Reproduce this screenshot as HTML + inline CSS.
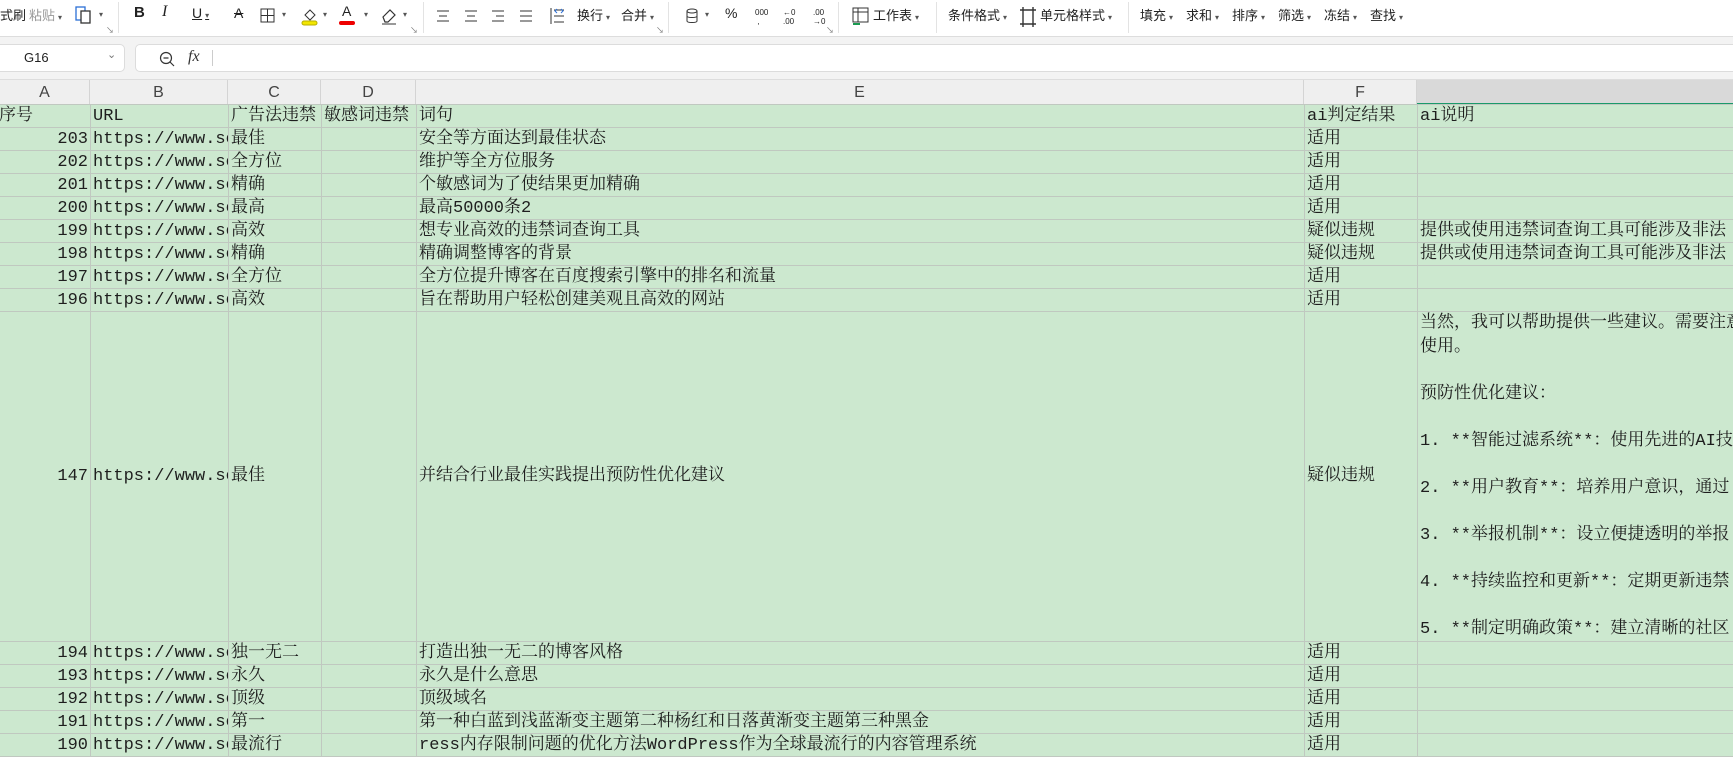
<!DOCTYPE html>
<html><head><meta charset="utf-8"><style>
*{margin:0;padding:0;box-sizing:border-box}
body{width:1733px;height:751px;overflow:hidden;background:#fff;position:relative;font-family:"Liberation Sans","Noto Sans CJK SC",sans-serif}
.t{position:absolute;font-size:13px;color:#222;top:5px;white-space:nowrap}
.c{font-size:8px;color:#555;margin-left:3px}
.sep{position:absolute;top:2px;width:1px;height:31px;background:#e3e3e3}
.ic{position:absolute;top:4px}
.corner{position:absolute;top:25px;font-size:8px;color:#777}
#tb{position:absolute;left:0;top:0;width:1733px;height:37px;background:#fff;border-bottom:1px solid #ddd;box-shadow:0 2px 4px rgba(0,0,0,.08)}
#fb{position:absolute;left:0;top:37px;width:1733px;height:42px;background:#f3f3f3}
.box{position:absolute;top:7px;height:28px;background:#fff;border:1px solid #dcdcdc;border-radius:5px}
#hdr{position:absolute;left:0;top:79px;height:25px;width:1733px;background:#efefef;border-top:1px solid #ddd}
.h{position:absolute;top:0;height:25px;line-height:25px;text-align:center;font-size:16px;color:#444;border-right:1px solid #d4d4d4}
table{position:absolute;left:-4px;top:104px;width:1751px;border-collapse:collapse;table-layout:fixed;font-family:"Liberation Mono","Noto Serif CJK SC",monospace;font-size:17px;color:#1e1e1e}
td{background:#cce8cf;border:1px solid #c0c8c0;height:23px;white-space:nowrap;overflow:hidden;padding:0 2px;line-height:21px;vertical-align:middle}
td.n{text-align:right}
</style></head><body>
<div id="tb">
<div class="t" style="left:0">式刷</div>
<div class="t" style="left:29px;color:#999">粘贴<span class="c">▾</span></div>
<svg class="ic" style="left:74px" width="20" height="22"><rect x="2" y="3" width="9" height="13" fill="none" stroke="#2b6fd6" stroke-width="1.3"/><rect x="7" y="7" width="9" height="12" fill="#fff" stroke="#333" stroke-width="1.3"/></svg>
<div class="t" style="left:96px"><span class="c">▾</span></div>
<div class="corner" style="left:106px">↘</div>
<div class="sep" style="left:118px"></div>
<div class="t" style="left:134px;font-weight:bold;font-size:15px;top:4px">B</div>
<div class="t" style="left:162px;font-style:italic;font-family:'Liberation Serif';font-size:16px;top:3px">I</div>
<div class="t" style="left:192px;text-decoration:underline;font-size:14px">U<span class="c">▾</span></div>
<div class="t" style="left:234px;text-decoration:line-through;font-size:14px">A</div>
<svg class="ic" style="left:260px;top:8px" width="16" height="16"><rect x="1" y="1" width="13" height="13" fill="none" stroke="#333"/><line x1="7.5" y1="1" x2="7.5" y2="14" stroke="#333"/><line x1="1" y1="7.5" x2="14" y2="7.5" stroke="#333"/></svg>
<div class="t" style="left:279px"><span class="c">▾</span></div>
<svg class="ic" style="left:301px;top:6px" width="18" height="22"><path d="M4 9l5-5 5 5-5 5z" fill="none" stroke="#333"/><rect x="1" y="15" width="15" height="4" rx="2" fill="#f2e600" stroke="#b8ad00"/></svg>
<div class="t" style="left:320px"><span class="c">▾</span></div>
<div class="t" style="left:342px;font-size:14px;top:3px">A</div>
<div style="position:absolute;left:339px;top:21px;width:16px;height:4px;background:#e00;border-radius:2px"></div>
<div class="t" style="left:361px"><span class="c">▾</span></div>
<svg class="ic" style="left:380px;top:6px" width="18" height="20"><path d="M3 11l7-7 5 5-7 7H5z" fill="none" stroke="#333" stroke-width="1.2"/><line x1="2" y1="18" x2="16" y2="18" stroke="#333"/></svg>
<div class="t" style="left:400px"><span class="c">▾</span></div>
<div class="corner" style="left:410px">↘</div>
<div class="sep" style="left:423px"></div>
<svg class="ic" style="left:436px;top:10px" width="110" height="14" stroke="#333"><path d="M1 1h12M3 6h8M1 11h12M29 1h12M31 6h8M29 11h12M56 1h12M60 6h8M56 11h12M84 1h12M84 6h12M84 11h12"/></svg>
<svg class="ic" style="left:550px;top:7px" width="16" height="18" stroke="#333" fill="none"><path d="M1 1v16M4 3h10M4 9h10M4 15h10"/><path d="M7 2l-2 2 2 2M11 2l2 2-2 2" stroke="#2b6fd6"/></svg>
<div class="t" style="left:577px">换行<span class="c">▾</span></div>
<div class="t" style="left:621px">合并<span class="c">▾</span></div>
<div class="corner" style="left:656px">↘</div>
<div class="sep" style="left:668px"></div>
<svg class="ic" style="left:685px;top:8px" width="14" height="16" fill="none" stroke="#333"><ellipse cx="7" cy="3" rx="5" ry="2"/><path d="M2 3v10c0 2 10 2 10 0V3M2 8c0 2 10 2 10 0"/></svg>
<div class="t" style="left:702px"><span class="c">▾</span></div>
<div class="t" style="left:725px;font-size:14px">%</div>
<div class="t" style="left:755px;font-size:8px;top:8px;line-height:9px">000<br>&nbsp;,</div>
<div class="t" style="left:783px;font-size:8px;top:8px;line-height:9px">←0<br>.00</div>
<div class="t" style="left:813px;font-size:8px;top:8px;line-height:9px">.00<br>→0</div>
<div class="corner" style="left:826px">↘</div>
<div class="sep" style="left:838px"></div>
<svg class="ic" style="left:852px;top:7px" width="18" height="20" fill="none" stroke="#333"><rect x="1" y="1" width="15" height="14"/><path d="M1 5h15M6 1v14"/><path d="M1 17h7" stroke="#1a9a50" stroke-width="2"/></svg>
<div class="t" style="left:873px">工作表<span class="c">▾</span></div>
<div class="sep" style="left:936px"></div>
<div class="t" style="left:948px">条件格式<span class="c">▾</span></div>
<svg class="ic" style="left:1019px;top:6px" width="18" height="22" fill="none" stroke="#333" stroke-width="1.4"><path d="M4 1v20M14 1v20M1 4h16M1 18h16"/></svg>
<div class="t" style="left:1040px">单元格样式<span class="c">▾</span></div>
<div class="sep" style="left:1128px"></div>
<div class="t" style="left:1140px">填充<span class="c">▾</span></div>
<div class="t" style="left:1186px">求和<span class="c">▾</span></div>
<div class="t" style="left:1232px">排序<span class="c">▾</span></div>
<div class="t" style="left:1278px">筛选<span class="c">▾</span></div>
<div class="t" style="left:1324px">冻结<span class="c">▾</span></div>
<div class="t" style="left:1370px">查找<span class="c">▾</span></div>
</div>
<div id="fb">
<div class="box" style="left:-6px;width:131px"><span style="position:absolute;left:29px;top:5px;font-size:13px;color:#222">G16</span><span style="position:absolute;left:112px;top:3px;font-size:11px;color:#777">⌄</span></div>
<div class="box" style="left:135px;width:1610px">
<svg style="position:absolute;left:23px;top:6px" width="16" height="16" fill="none" stroke="#333" stroke-width="1.2"><circle cx="7" cy="7" r="5.5"/><path d="M4.5 7h5M11 11l4 4"/></svg>
<span style="position:absolute;left:52px;top:3px;font-family:'Liberation Serif';font-style:italic;font-size:16px;color:#333">fx</span>
<div style="position:absolute;left:76px;top:5px;width:1px;height:16px;background:#ccc"></div>
</div>
</div>
<div id="hdr">
<div class="h" style="left:0;width:90px">A</div>
<div class="h" style="left:90px;width:138px">B</div>
<div class="h" style="left:228px;width:93px">C</div>
<div class="h" style="left:321px;width:95px">D</div>
<div class="h" style="left:416px;width:888px">E</div>
<div class="h" style="left:1304px;width:113px">F</div>
<div class="h" style="left:1417px;width:320px;background:#d9d9d9;border-bottom:2px solid #1a9a6a"></div>
</div>
<table>
<colgroup><col style="width:94px"><col style="width:138px"><col style="width:93px"><col style="width:95px"><col style="width:888px"><col style="width:113px"><col style="width:330px"></colgroup>
<tr><td>序号</td><td>URL</td><td>广告法违禁</td><td>敏感词违禁</td><td>词句</td><td>ai判定结果</td><td>ai说明</td></tr>
<tr><td class="n">203</td><td>https://www.se</td><td>最佳</td><td></td><td>安全等方面达到最佳状态</td><td>适用</td><td></td></tr>
<tr><td class="n">202</td><td>https://www.se</td><td>全方位</td><td></td><td>维护等全方位服务</td><td>适用</td><td></td></tr>
<tr><td class="n">201</td><td>https://www.se</td><td>精确</td><td></td><td>个敏感词为了使结果更加精确</td><td>适用</td><td></td></tr>
<tr><td class="n">200</td><td>https://www.se</td><td>最高</td><td></td><td>最高50000条2</td><td>适用</td><td></td></tr>
<tr><td class="n">199</td><td>https://www.se</td><td>高效</td><td></td><td>想专业高效的违禁词查询工具</td><td>疑似违规</td><td>提供或使用违禁词查询工具可能涉及非法</td></tr>
<tr><td class="n">198</td><td>https://www.se</td><td>精确</td><td></td><td>精确调整博客的背景</td><td>疑似违规</td><td>提供或使用违禁词查询工具可能涉及非法</td></tr>
<tr><td class="n">197</td><td>https://www.se</td><td>全方位</td><td></td><td>全方位提升博客在百度搜索引擎中的排名和流量</td><td>适用</td><td></td></tr>
<tr><td class="n">196</td><td>https://www.se</td><td>高效</td><td></td><td>旨在帮助用户轻松创建美观且高效的网站</td><td>适用</td><td></td></tr>
<tr style="height:329px"><td class="n">147</td><td>https://www.se</td><td>最佳</td><td></td><td>并结合行业最佳实践提出预防性优化建议</td><td>疑似违规</td><td style="vertical-align:top;line-height:23.5px;white-space:pre;padding-top:0">当然，我可以帮助提供一些建议。需要注意
使用。

预防性优化建议：

1. **智能过滤系统**：使用先进的AI技术

2. **用户教育**：培养用户意识，通过

3. **举报机制**：设立便捷透明的举报

4. **持续监控和更新**：定期更新违禁

5. **制定明确政策**：建立清晰的社区</td></tr>
<tr><td class="n">194</td><td>https://www.se</td><td>独一无二</td><td></td><td>打造出独一无二的博客风格</td><td>适用</td><td></td></tr>
<tr><td class="n">193</td><td>https://www.se</td><td>永久</td><td></td><td>永久是什么意思</td><td>适用</td><td></td></tr>
<tr><td class="n">192</td><td>https://www.se</td><td>顶级</td><td></td><td>顶级域名</td><td>适用</td><td></td></tr>
<tr><td class="n">191</td><td>https://www.se</td><td>第一</td><td></td><td>第一种白蓝到浅蓝渐变主题第二种杨红和日落黄渐变主题第三种黑金</td><td>适用</td><td></td></tr>
<tr><td class="n">190</td><td>https://www.se</td><td>最流行</td><td></td><td>ress内存限制问题的优化方法WordPress作为全球最流行的内容管理系统</td><td>适用</td><td></td></tr>
</table>
</body></html>
